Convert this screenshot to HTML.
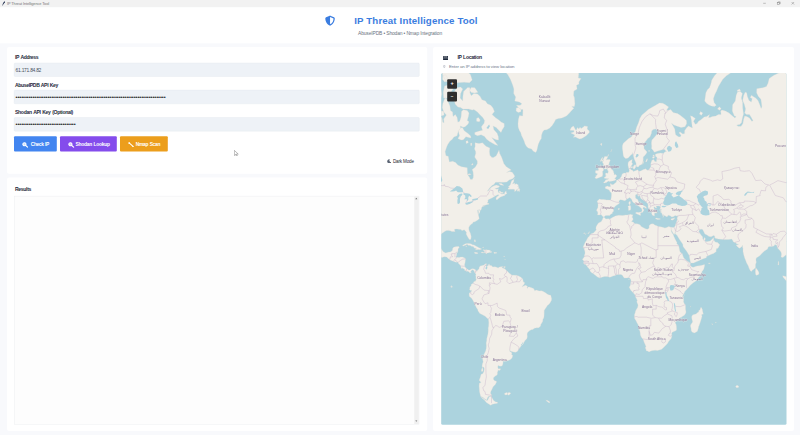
<!DOCTYPE html>
<html lang="en">
<head>
<meta charset="utf-8">
<title>IP Threat Intelligence Tool</title>
<style>
*{box-sizing:border-box;margin:0;padding:0}
html,body{width:800px;height:435px;overflow:hidden}
body{position:relative;background:#f8f9fc;font-family:"Liberation Sans","DejaVu Sans",sans-serif;color:#1e293b}
.abs{position:absolute}
#titlebar{left:0;top:0;width:800px;height:7.2px}
#titlebar .t{left:7px;top:1.2px;font-size:3.9px;color:#777;white-space:nowrap;line-height:5px}
#h1{left:354.2px;top:14px;font-size:9.7px;font-weight:bold;color:#3b7de0;white-space:nowrap;line-height:14px;letter-spacing:0px}
#sub{left:358px;top:31px;font-size:4.9px;color:#6b7280;white-space:nowrap;line-height:6px}
.lbl{word-spacing:0.5px;font-size:5.1px;font-weight:bold;color:#1e293b;white-space:nowrap;line-height:7px}
.inp{left:14px;width:405px;height:13.9px;border:0.4px solid transparent;font-size:4.9px;color:#474f5c;line-height:13.8px;padding-left:0.6px;white-space:nowrap;overflow:hidden}
.btn{top:136.2px;height:15.3px;border-radius:1px;color:#fff;word-spacing:0.5px;font-size:4.9px;font-weight:bold;line-height:18.6px;white-space:nowrap}
#sb{left:414.2px;top:196.4px;width:4.6px;height:227.6px}
.zb{left:447.2px;width:9.8px;height:9.6px;color:#fff;font-weight:bold;text-align:center;font-size:5.5px;line-height:9.4px}
/*FIT*/#t0{letter-spacing:-0.103px}#h1{letter-spacing:0.141px}#sub{letter-spacing:-0.122px}#l1{letter-spacing:-0.354px}#ipv{letter-spacing:-0.255px}#l2{letter-spacing:-0.366px}#d1{letter-spacing:-0.083px}#l3{letter-spacing:-0.325px}#d2{letter-spacing:-0.083px}#b1{letter-spacing:-0.396px}#b2{letter-spacing:-0.243px}#b3{letter-spacing:-0.316px}#dm{letter-spacing:-0.163px}#l4{letter-spacing:-0.344px}#l5{letter-spacing:-0.314px}#hint{letter-spacing:-0.109px}/*ENDFIT*/

.dots{position:relative;top:0px;color:#222;font-size:5.6px}
</style>
</head>
<body>
<svg class="abs" style="left:0;top:0" width="800" height="435" viewBox="0 0 800 435">
<rect width="800" height="435" fill="#f8f9fc"/>
<rect width="800" height="7.3" fill="#f2f2f2"/>
<rect y="7.3" width="800" height="36" fill="#fff"/>
<rect x="7" y="47" width="420.2" height="126.7" rx="2" fill="#fff"/>
<rect x="7" y="177.6" width="420.2" height="253.4" rx="2" fill="#fff"/>
<rect x="433" y="47" width="361" height="384" rx="2" fill="#fff"/>
<g fill="#eef2f7" stroke="#e2e7ee" stroke-width="0.35">
<rect x="14.1" y="63" width="405.2" height="13.5" rx="1"/>
<rect x="14.1" y="90.1" width="405.2" height="13.7" rx="1"/>
<rect x="14.1" y="117.5" width="405.2" height="13.7" rx="1"/>
</g>
<rect x="14" y="136.2" width="42.8" height="15.3" rx="1" fill="#4285f0"/>
<rect x="60" y="136.2" width="56.8" height="15.3" rx="1" fill="#844cec"/>
<rect x="120" y="136.2" width="47.8" height="15.3" rx="1" fill="#ec9e1c"/>
<rect x="14.2" y="196.1" width="404.8" height="228.1" fill="#fdfdfd" stroke="#e9ebee" stroke-width="0.4"/>
<rect x="414.2" y="196.3" width="4.6" height="227.7" fill="#f0f0f0"/>
</svg>
<div id="titlebar" class="abs">
  <svg class="abs" style="left:1.7px;top:0.9px" width="3.4" height="4.8" viewBox="0 0 10 14"><path d="M8.5 0.5 C5 2 2 7 1.2 13.5 L2.6 13.5 C3.4 10 5 7.5 9 4.5 Z" fill="#1f2d4d"/></svg>
  <div class="abs t" id="t0">IP Threat Intelligence Tool</div>
  <svg class="abs" style="left:760px;top:0" width="40" height="7" viewBox="0 0 40 7" fill="none" stroke="#7a7a7a" stroke-width="0.45">
    <path d="M3.2 3.3h2.6"/>
    <rect x="17.2" y="2.6" width="2.2" height="2.0"/><path d="M18 2.6v-0.7h2.2v2h-0.8"/>
    <path d="M31.6 2l2.5 2.5M34.1 2l-2.5 2.5"/>
  </svg>
</div>
<svg class="abs" style="left:325.3px;top:14.8px" width="10.1" height="11.3" viewBox="0 0 512 512"><path fill="#3b7de0" d="M256 0c4.600 0 9.200 1 13.400 2.900L457.700 82.800c22 9.300 38.400 31 38.300 57.200c-.5 99.200-41.300 280.700-213.600 363.200c-16.700 8-36.100 8-52.800 0C57.300 420.700 16.500 239.200 16 140c-.1-26.200 16.300-47.900 38.300-57.200L242.700 2.900C246.800 1 251.400 0 256 0zm0 66.800V444.800C394 378 431.100 230.100 432 141.400L256 66.800z"/></svg>
<div id="h1" class="abs">IP Threat Intelligence Tool</div>
<div id="sub" class="abs">AbuseIPDB • Shodan • Nmap Integration</div>

<div class="abs lbl" id="l1" style="left:15px;top:53.7px">IP Address</div>
<div class="abs inp" style="top:62.9px"><span id="ipv" style="position:relative;top:0px">61.171.84.82</span></div>
<div class="abs lbl" id="l2" style="left:15px;top:81.5px">AbuseIPDB API Key</div>
<div class="abs inp" style="top:90.1px"><span class="dots" id="d1">••••••••••••••••••••••••••••••••••••••••••••••••••••••••••••••••••••••••••••••••</span></div>
<div class="abs lbl" id="l3" style="left:15px;top:108.5px">Shodan API Key (Optional)</div>
<div class="abs inp" style="top:117.5px"><span class="dots" id="d2" style="top:-0.7px">••••••••••••••••••••••••••••••••</span></div>

<div class="abs btn" style="left:14px;width:42.8px"><svg class="abs" style="left:8.0px;top:5.8px" width="6.4" height="5.55" viewBox="0 0 12 10.4"><circle cx="4.6" cy="4.2" r="2.9" fill="#fff" fill-opacity="0.7" stroke="#fff" stroke-width="2.1"/><path d="M7 6.6L10.6 9.6" stroke="#fff" stroke-width="2.2" stroke-linecap="round"/></svg><span class="abs" id="b1" style="left:16.8px">Check IP</span></div>
<div class="abs btn" style="left:60px;width:56.8px"><svg class="abs" style="left:8.3px;top:5.8px" width="6.4" height="5.55" viewBox="0 0 12 10.4"><circle cx="4.6" cy="4.2" r="2.9" fill="#fff" fill-opacity="0.7" stroke="#fff" stroke-width="2.1"/><path d="M7 6.6L10.6 9.6" stroke="#fff" stroke-width="2.2" stroke-linecap="round"/></svg><span class="abs" id="b2" style="left:15.5px">Shodan Lookup</span></div>
<div class="abs btn" style="left:120px;width:47.6px"><svg class="abs" style="left:7.8px;top:5.8px" width="6.2" height="5.4" viewBox="0 0 12 10.4"><path d="M2.2 1.8L9.8 8.6" stroke="#fff" stroke-width="2" stroke-linecap="round"/><circle cx="2.4" cy="2" r="1.7" fill="#fff"/><circle cx="9.6" cy="8.4" r="1.3" fill="#fff"/></svg><span class="abs" id="b3" style="left:15.8px">Nmap Scan</span></div>

<svg class="abs" style="left:386.9px;top:158.9px" width="4.6" height="4.6" viewBox="0 0 10 10"><path d="M6.2 0.6A4.6 4.6 0 1 0 9.4 6.6 3.6 3.6 0 0 1 6.2 0.6Z" fill="#5b6474"/></svg>
<div class="abs" id="dm" style="left:392.9px;top:159.3px;font-size:4.6px;line-height:6px;color:#1f2937;white-space:nowrap">Dark Mode</div>

<svg class="abs" style="left:234.1px;top:149.5px" width="4.6" height="6.8" viewBox="0 0 13 19"><path d="M1 1v14.5l3.6-3.3 2.5 5.8 2.3-1-2.5-5.6h5.1z" fill="#fff" stroke="#444" stroke-width="1.3" stroke-linejoin="round" opacity="0.8"/></svg>
<div class="abs lbl" id="l4" style="left:15px;top:185.5px">Results</div>
<div id="sb" class="abs"><svg class="abs" style="left:0;top:0" width="4.6" height="227.6" viewBox="0 0 4.6 227.6"><path d="M1.3 3.1L2.3 1.7L3.3 3.1Z" fill="#6a6a6a"/><path d="M1.3 224.6L2.3 226L3.3 224.6Z" fill="#6a6a6a"/></svg></div>

<svg class="abs" style="left:442.9px;top:55.8px" width="5.2" height="4" viewBox="0 0 13 10"><rect x="0" y="0" width="13" height="10" rx="1" fill="#1e293b"/><path d="M2 2.2h3.2M7.8 2.2H11M5.2 0v3.6M7.8 0v3.6M0 5.2h13" stroke="#fff" stroke-width="1" opacity="0.85"/></svg>
<svg class="abs" style="left:443.2px;top:64.6px" width="2.6" height="3.5" viewBox="0 0 7.4 10"><path d="M3.7 0.3A3.3 3.3 0 0 0 0.4 3.6C0.4 6 3.7 9.7 3.7 9.7S7 6 7 3.6A3.3 3.3 0 0 0 3.7 0.3Z" fill="#c9ccd3"/><circle cx="3.7" cy="3.5" r="1.2" fill="#fff"/></svg>
<div class="abs lbl" id="l5" style="left:457.4px;top:54.4px">IP Location</div>
<div class="abs" id="hint" style="left:449px;top:63.7px;font-size:4.35px;line-height:6px;color:#6f7a8c;white-space:nowrap">Enter an IP address to view location</div>
<svg class="abs" style="left:0;top:0" width="800" height="435" viewBox="0 0 800 435">
<defs><clipPath id="mc"><rect x="441.2" y="73" width="345.3" height="351.7" rx="1.5"/></clipPath></defs>
<g clip-path="url(#mc)"><rect x="440" y="72" width="348" height="354" fill="#acd3de"/><g transform="translate(441.5 73.5)" style="filter:blur(0.3px)">
<path d="M161.5 144.1L162.6 143.8L164.4 145.4L166.8 145.2L168.4 145.6L170.9 144.1L173.8 142.5L177.3 141.7L181.1 141.9L184.3 141.4L185.9 141.5L189.6 140.7L190.3 141.6L191.6 141.2L190.8 142.7L190.8 144.1L191.7 145.4L191.2 146.5L190.0 148.2L191.6 148.6L193.5 150.3L195.5 150.3L197.2 150.7L198.8 151.4L199.4 152.8L201.5 153.9L204.0 155.3L205.8 155.7L207.6 154.7L207.6 153.0L207.7 152.0L209.0 150.7L210.6 150.2L212.2 150.5L213.2 151.6L214.7 152.0L216.8 153.0L220.4 153.5L223.4 154.6L225.2 153.9L227.1 153.0L229.4 153.7L230.0 156.3L229.6 157.2L230.5 159.4L231.6 160.8L232.1 162.0L232.4 163.0L234.0 166.2L235.1 168.4L235.5 168.5L235.3 170.3L237.1 171.8L237.6 174.1L238.1 176.8L238.5 178.3L239.7 179.4L240.6 179.8L241.7 182.9L242.2 184.2L243.1 185.3L245.2 187.2L247.2 188.4L247.9 189.0L249.0 189.9L248.8 191.0L247.9 191.6L249.0 191.8L250.2 193.5L252.0 193.7L253.8 193.1L255.6 192.4L257.7 192.3L259.5 192.1L261.4 191.5L263.0 191.0L263.1 192.3L262.8 193.6L262.3 195.5L261.4 197.0L260.5 198.0L259.6 200.2L258.2 202.8L255.6 206.1L253.8 207.9L252.5 208.7L250.2 210.5L248.4 212.3L247.6 213.2L246.0 215.3L244.7 216.4L243.3 218.0L242.6 219.5L241.5 221.4L241.0 223.0L241.9 224.4L242.2 226.6L242.0 228.2L242.8 230.2L243.8 231.1L244.0 232.9L244.0 235.6L244.5 238.4L244.2 239.8L242.9 241.7L240.4 243.3L237.8 244.7L236.5 246.3L234.0 248.2L233.7 249.5L234.4 250.5L234.9 252.6L235.1 255.9L234.6 257.1L232.4 258.1L230.7 258.8L230.1 260.2L230.5 261.9L229.8 264.8L228.9 266.0L227.1 268.0L226.0 269.9L224.1 272.0L221.6 274.5L219.8 276.0L217.5 276.6L216.1 277.1L213.6 276.7L211.3 277.1L209.3 277.5L207.6 278.4L206.1 277.5L204.9 277.4L204.7 276.4L203.8 274.3L204.5 273.0L203.3 270.3L202.6 268.7L202.0 266.7L201.3 265.4L199.9 263.8L198.9 261.5L198.5 258.2L197.8 255.9L197.8 253.9L196.9 251.8L195.6 249.5L194.4 247.1L193.2 245.2L192.9 243.4L193.0 241.1L193.6 239.6L194.0 237.4L195.1 235.5L196.0 234.3L196.5 232.0L196.4 230.9L195.5 228.9L195.3 228.0L195.8 227.1L194.9 225.1L193.9 223.2L193.7 222.2L193.1 220.8L191.7 219.3L190.8 218.3L189.1 216.6L188.4 215.1L187.6 213.6L188.5 212.8L188.8 211.6L189.1 210.5L189.3 209.0L189.5 207.1L189.1 205.5L188.4 205.0L187.8 204.2L186.8 204.2L185.3 204.4L184.4 204.5L182.8 204.6L181.6 203.0L180.9 201.8L179.5 201.1L178.0 200.9L176.3 201.0L174.1 201.4L173.8 202.0L171.6 202.4L169.8 203.2L168.3 203.8L166.7 203.2L164.9 203.0L163.1 203.1L161.2 203.5L159.6 204.1L158.3 204.6L156.0 203.4L154.2 202.1L152.8 201.1L151.6 200.0L149.8 199.1L148.9 198.0L148.4 197.1L148.4 196.1L147.6 195.3L146.0 193.5L145.3 192.6L144.3 191.1L143.0 190.8L142.2 190.1L142.1 188.8L142.5 188.2L142.1 187.2L140.9 185.8L141.8 184.8L142.7 183.5L143.0 181.6L143.6 179.6L143.2 177.1L142.7 176.0L143.0 174.9L141.7 174.5L141.8 173.1L142.5 171.4L143.6 168.9L145.0 166.8L145.7 165.2L146.2 164.2L147.8 162.8L148.5 161.4L149.1 160.5L151.9 159.4L153.9 157.6L154.8 155.9L154.4 155.1L154.6 153.2L155.6 151.6L156.9 149.6L158.5 148.8L159.8 148.0L160.8 146.2L161.3 144.9ZM259.6 233.7L260.7 235.6L261.2 238.0L261.8 240.4L261.2 241.1L260.5 240.2L260.2 241.7L260.5 242.8L259.9 245.1L259.1 247.7L258.0 250.9L257.2 253.0L256.6 255.5L255.9 257.8L254.8 258.6L252.9 259.4L252.2 259.3L250.6 258.6L249.7 257.1L249.6 255.0L249.0 252.8L249.1 251.5L249.9 250.3L250.8 249.0L251.1 247.7L250.7 246.7L250.3 244.8L250.2 243.3L251.0 241.5L252.5 241.1L254.3 240.6L255.4 239.8L256.1 238.9L257.2 238.5L257.3 237.1L258.4 236.5L258.9 235.2L259.1 234.2ZM355.1 109.4L355.1 -17.2L349.8 -5.1L346.2 -3.6L341.8 -2.1L337.3 -0.6L332.0 1.9L327.7 5.1L326.5 9.8L324.9 13.1L321.3 14.3L317.8 14.7L315.3 15.3L315.1 19.3L316.9 22.9L319.4 25.7L320.1 30.2L320.4 33.4L319.6 35.0L318.3 31.3L316.5 26.9L314.2 24.6L311.6 22.9L310.0 21.7L308.7 24.0L310.7 25.2L309.8 28.6L307.5 26.9L305.9 22.9L305.2 19.3L303.6 18.7L302.1 22.3L301.2 26.9L302.8 30.7L304.1 35.5L303.2 39.6L305.0 41.1L308.0 41.1L309.8 44.0L311.6 47.3L310.3 47.8L308.0 44.5L305.3 43.1L303.2 42.6L302.1 45.9L301.4 50.1L299.6 52.8L296.4 52.8L295.2 51.5L298.2 51.0L300.0 49.2L300.9 44.5L302.0 40.6L301.2 34.5L301.1 29.1L299.8 24.6L300.9 19.9L298.2 17.5L296.3 18.1L294.7 21.7L293.8 27.4L291.1 31.3L290.8 37.6L292.9 42.6L294.7 43.1L293.4 44.5L289.3 41.1L287.6 39.6L284.0 37.6L280.4 36.6L279.2 37.6L279.6 41.1L276.9 41.1L274.2 42.6L270.7 43.1L268.5 44.0L267.1 44.0L268.0 41.1L265.3 43.1L262.7 43.5L259.1 46.4L257.0 47.8L255.6 50.1L253.8 50.8L252.0 47.8L253.8 45.0L251.1 43.1L249.0 42.3L249.9 46.4L250.6 52.4L250.9 54.6L249.3 53.7L247.0 52.4L244.9 54.6L243.1 57.2L243.1 60.1L241.3 60.5L238.7 58.4L237.4 59.3L239.6 61.8L238.7 63.4L236.9 63.2L234.2 61.3L233.7 58.9L233.3 55.4L231.6 52.4L230.0 49.7L232.4 51.5L235.1 52.6L239.6 54.1L243.5 53.2L245.2 50.1L244.9 46.9L242.8 45.0L238.7 41.8L236.0 40.1L231.6 39.1L229.2 36.1L227.1 36.8L225.0 36.8L227.1 33.4L223.6 31.0L221.2 29.7L217.9 29.4L214.1 31.8L210.2 34.0L206.7 36.1L204.0 38.6L200.4 41.6L198.3 45.0L197.2 48.7L195.1 53.7L193.9 58.0L191.6 60.9L189.8 63.4L187.1 65.0L184.4 67.4L181.8 69.7L180.9 72.3L180.9 75.3L181.4 78.2L181.6 80.6L182.0 82.7L183.6 84.7L184.6 85.1L186.6 84.4L188.0 83.0L189.2 81.7L190.7 80.6L190.8 78.9L191.4 81.0L191.9 82.3L192.6 85.1L193.3 86.7L194.6 89.7L194.6 91.6L195.1 93.2L196.9 93.5L197.8 91.9L200.1 91.1L201.2 89.3L201.7 86.1L201.7 83.4L203.1 82.3L204.5 80.6L205.6 78.5L203.6 76.2L202.6 75.3L202.4 72.3L202.9 69.3L204.5 67.4L206.3 65.0L208.4 63.4L209.9 60.1L210.2 57.6L211.6 55.9L214.3 55.4L216.4 56.7L217.2 58.9L215.6 60.5L213.1 63.6L210.4 66.6L209.9 69.3L210.2 72.7L210.0 74.9L211.5 76.7L212.9 78.7L216.3 77.6L219.8 76.5L222.7 75.8L225.0 78.0L223.6 78.3L221.8 79.9L219.1 79.6L216.0 79.9L213.8 80.8L214.0 82.7L215.6 83.9L215.2 85.7L214.8 88.2L213.4 87.9L212.2 85.9L210.4 86.7L209.3 89.7L209.4 92.9L208.4 94.7L207.4 96.0L206.5 96.7L205.2 96.6L204.5 95.3L201.9 96.1L199.6 97.3L197.4 98.1L196.2 96.3L193.9 97.2L191.6 97.9L191.2 96.7L189.8 96.4L189.1 95.2L189.1 93.5L190.0 91.9L191.2 90.3L190.3 89.3L190.5 87.4L190.8 85.9L189.6 86.6L187.3 88.0L186.6 89.3L186.5 91.6L186.8 93.3L187.3 95.0L187.8 96.9L187.6 98.1L186.9 99.0L185.0 98.8L184.4 99.7L182.7 99.6L181.4 99.9L180.5 101.1L180.0 102.8L179.1 104.0L178.2 105.3L177.2 105.8L176.1 106.4L175.0 106.8L174.8 108.5L173.8 109.6L172.4 110.6L171.6 111.3L170.0 111.1L169.7 110.2L168.6 110.2L169.2 112.9L167.6 113.2L165.8 112.6L163.6 113.6L164.0 115.0L166.1 115.7L167.7 116.6L168.4 117.9L169.9 119.5L170.0 121.3L169.8 123.8L169.3 126.2L168.4 126.6L165.2 126.4L161.9 126.0L159.6 126.0L158.0 125.6L156.9 126.6L155.6 127.7L156.4 129.4L156.5 132.0L156.4 134.1L155.3 136.1L155.1 137.5L156.0 138.0L156.4 139.4L156.0 141.4L158.0 141.4L159.6 141.0L160.8 142.4L162.0 143.6L162.6 143.3L164.2 142.1L165.8 142.1L167.7 141.9L168.3 142.0L169.2 140.7L170.8 140.0L171.1 138.5L172.4 137.5L171.5 135.9L172.2 134.6L173.5 133.0L174.7 131.9L175.9 131.3L177.7 130.1L177.9 129.0L177.4 128.0L177.5 127.2L178.9 126.2L180.5 126.5L181.6 126.7L182.7 127.2L183.9 126.9L185.0 125.8L186.6 125.0L187.8 124.0L189.4 124.9L190.3 126.2L190.7 127.6L191.7 128.9L193.0 129.6L193.9 130.6L194.6 131.2L196.2 131.8L197.1 132.6L197.8 133.1L198.7 133.9L199.7 134.5L200.4 136.0L200.6 137.1L200.1 137.8L199.8 139.2L200.6 139.3L201.4 138.3L202.4 136.9L202.2 135.7L201.3 135.2L202.0 133.5L202.8 133.7L204.0 134.6L204.7 135.1L204.9 134.1L204.0 133.1L202.0 131.9L200.3 130.8L200.8 130.1L199.2 130.1L198.1 129.5L197.2 128.7L196.2 126.1L194.4 124.9L193.9 123.8L194.0 122.5L193.9 121.4L195.3 120.8L196.5 121.0L196.2 122.3L196.7 123.0L197.6 121.8L198.5 122.5L199.0 124.5L200.3 125.8L201.3 126.2L203.1 127.5L204.9 128.8L206.1 130.0L206.7 131.5L206.5 133.7L207.6 135.1L208.1 136.1L209.0 137.0L209.5 138.4L210.7 138.5L209.9 139.5L210.4 140.5L210.6 141.7L211.3 141.4L211.8 142.5L212.2 141.9L213.1 142.5L212.9 140.7L212.5 140.2L213.4 140.2L212.9 139.3L214.1 139.4L214.8 139.8L214.7 138.7L213.6 138.0L212.7 137.2L212.9 136.2L213.4 136.6L212.7 135.1L212.3 133.7L212.8 133.2L213.6 134.0L213.9 134.7L214.5 133.9L214.7 134.7L215.3 134.2L214.5 133.0L215.4 132.4L216.6 132.4L218.0 132.6L218.4 133.2L219.6 133.2L218.6 134.4L218.9 134.2L218.4 135.7L219.8 135.6L219.6 137.0L218.9 137.7L220.0 138.1L218.8 138.6L220.4 139.4L220.4 140.6L220.8 141.3L222.3 141.3L220.7 142.1L222.3 141.9L223.7 142.2L224.6 143.2L226.0 143.1L226.6 141.7L227.8 142.0L228.9 142.4L230.3 143.5L232.3 143.1L233.5 141.9L234.9 142.4L236.3 142.1L235.9 143.4L235.6 144.7L235.8 146.0L235.1 148.2L234.4 149.9L233.9 152.0L233.2 153.2L232.1 154.0L229.4 153.7L229.9 156.5L230.8 158.3L231.8 160.0L232.9 160.9L233.4 159.4L234.2 157.3L233.9 159.4L233.6 160.3L235.5 161.7L236.8 163.9L238.2 166.3L239.6 168.2L241.3 170.7L241.6 173.1L243.6 175.7L245.0 177.6L247.6 181.8L248.4 185.7L248.9 188.4L249.3 189.6L252.1 189.4L254.7 188.3L257.3 187.2L259.3 186.2L261.8 185.2L264.8 184.2L264.9 183.1L268.2 181.6L270.5 180.5L272.1 179.9L274.8 177.9L274.6 176.7L275.1 175.1L276.5 174.7L278.3 171.2L276.2 169.1L273.7 168.4L272.9 167.6L272.2 166.1L272.0 164.0L271.5 164.8L270.3 165.9L268.7 167.5L266.2 168.0L264.1 168.3L263.4 167.2L263.7 165.8L263.7 164.6L263.0 164.1L262.2 165.5L262.3 166.9L261.2 165.1L261.2 163.2L260.3 162.4L258.2 159.6L257.2 157.6L258.3 156.5L259.3 155.5L261.1 156.1L262.4 158.5L263.4 160.6L265.5 161.5L267.6 163.0L269.6 163.3L272.1 162.1L273.2 162.4L273.3 164.4L274.7 165.1L276.9 165.6L279.8 165.8L282.8 166.1L286.9 166.0L290.2 165.6L291.1 166.7L291.8 168.3L293.2 169.1L294.2 169.3L295.3 170.6L297.0 170.4L296.5 171.2L294.6 171.6L295.7 172.9L297.1 174.3L298.2 174.7L300.4 173.1L300.9 171.6L301.2 173.9L301.5 175.2L301.5 177.9L302.3 181.6L303.2 184.5L304.3 187.2L305.0 189.2L306.7 192.2L307.5 194.5L308.8 197.2L309.9 197.9L311.0 196.6L312.4 195.7L314.0 193.9L314.0 190.9L314.8 188.8L314.4 186.3L314.8 184.4L316.3 183.5L318.3 182.2L320.1 180.3L322.9 177.4L324.6 176.4L326.1 175.5L326.7 173.5L328.1 172.9L330.2 173.0L332.5 172.5L333.2 171.2L334.5 171.2L335.2 171.7L335.6 173.3L336.1 174.5L337.2 175.8L338.6 177.3L339.6 178.8L340.0 180.7L339.5 183.5L341.4 183.9L343.2 182.6L344.4 181.6L345.5 182.6L345.8 185.3L346.4 187.2L347.3 190.8L347.3 194.4L355.1 194.4ZM161.9 109.2L162.8 109.5L165.5 108.7L166.7 107.4L167.6 107.9L169.7 107.7L172.4 107.3L173.7 106.8L174.5 106.1L174.5 105.5L173.1 105.2L173.8 104.3L174.8 103.4L175.1 102.0L174.3 101.0L172.5 101.2L172.6 100.3L172.2 99.1L171.8 97.4L170.9 96.3L169.9 95.8L169.3 94.4L168.4 92.2L166.5 91.6L167.4 90.7L167.7 89.3L168.3 87.9L168.8 86.7L168.4 86.1L165.8 86.1L164.7 86.6L165.2 85.5L166.6 82.9L163.1 83.0L162.6 84.2L161.7 85.7L161.9 87.4L161.0 89.2L162.0 90.3L161.9 91.9L161.8 93.8L163.1 92.2L163.7 93.3L162.8 95.0L163.4 95.8L165.6 95.0L166.5 94.9L165.6 96.3L166.8 97.5L166.6 99.0L166.5 99.7L164.4 99.6L163.8 99.9L164.5 100.5L163.6 101.4L164.8 102.2L163.6 103.4L162.6 104.0L162.9 104.7L164.5 104.9L166.4 105.3L167.2 104.9L166.7 105.7L165.6 106.0L164.0 106.6L163.6 107.5L162.9 108.2ZM158.9 93.5L161.1 94.0L161.9 95.3L162.2 96.6L161.0 97.9L161.2 99.7L161.3 100.9L160.7 103.1L159.6 103.3L157.4 104.3L154.5 105.3L153.5 104.0L154.4 103.1L154.3 102.0L155.5 101.7L156.0 100.2L154.0 99.6L154.0 97.8L154.2 96.9L156.8 96.9L157.4 96.0L156.4 95.7L157.2 94.3ZM131.6 63.7L133.1 62.4L132.9 61.3L129.3 59.5L132.4 58.4L132.5 56.9L128.4 56.7L130.0 53.7L132.0 52.6L134.0 56.3L134.7 56.9L135.9 54.1L137.3 55.4L138.6 53.7L139.6 55.0L141.6 53.7L143.0 52.4L146.1 52.9L145.7 55.4L147.8 57.6L147.8 58.9L146.6 60.3L145.0 62.0L142.4 63.8L140.2 65.0L138.0 65.4L135.9 64.6L134.0 63.6ZM194.1 139.6L194.6 138.8L195.7 138.8L196.9 139.1L199.1 138.6L199.8 138.6L198.8 140.3L199.2 141.3L198.9 142.1L197.3 141.3L196.1 140.8L194.4 140.1ZM186.6 132.5L187.3 132.6L188.4 131.7L189.1 132.5L189.3 134.6L189.0 136.6L188.0 136.8L187.1 137.1L186.9 136.2L186.9 133.9L186.5 133.2ZM187.3 128.9L188.6 127.5L189.0 129.4L188.4 131.3L187.6 131.0L187.3 129.9ZM213.8 145.2L214.7 144.5L216.6 145.0L218.8 145.3L218.7 145.8L216.0 146.0L213.9 145.3ZM229.4 145.7L230.5 144.9L231.2 145.0L233.5 144.3L232.4 145.5L232.6 145.9L231.8 146.1L230.7 146.7L229.6 146.3ZM176.3 135.6L177.5 134.7L178.1 135.3L177.5 136.2L176.8 136.0ZM212.9 137.0L213.6 136.9L215.0 137.8L215.6 139.2L215.0 139.2L214.0 138.0ZM221.2 143.4L222.1 142.6L222.0 143.5L221.4 143.8ZM218.0 136.4L218.9 136.1L219.3 136.9L218.4 136.9ZM191.6 93.8L192.1 92.4L193.3 91.3L194.4 91.6L194.2 93.8L193.3 94.9L192.8 95.7L191.7 95.3ZM189.4 93.2L190.8 92.9L191.2 94.1L190.3 94.6L189.6 94.1ZM204.2 88.0L205.4 85.2L206.1 85.4L205.4 87.7L204.5 88.7ZM201.2 91.0L201.5 88.9L202.4 87.2L201.9 89.3ZM210.8 84.1L211.5 83.0L213.4 83.2L212.9 84.1L211.5 85.1ZM211.2 82.0L212.2 81.4L213.0 82.2L212.0 82.7ZM206.8 77.4L207.6 76.7L208.3 77.4L207.6 78.0ZM314.0 194.9L314.7 194.7L316.4 197.0L317.2 198.5L317.5 199.8L317.0 201.0L315.3 201.8L314.4 201.4L314.0 199.9L313.9 198.0L314.1 196.2ZM263.2 27.4L263.7 24.0L264.4 19.3L265.9 16.2L268.0 14.3L269.4 10.5L270.3 6.5L273.0 2.3L276.9 -2.1L282.2 -5.1L287.6 -8.2L292.9 -10.5L294.7 -5.8L290.2 -1.3L284.9 2.3L281.3 5.8L279.2 9.2L276.9 13.1L275.1 17.5L273.3 21.1L271.9 25.2L272.6 29.1L274.8 31.8L273.0 32.9L269.8 32.4L267.1 31.3L265.0 29.7ZM276.0 35.5L277.8 33.2L279.6 35.0L278.3 36.8ZM257.9 40.6L259.1 38.1L261.2 39.6L260.0 41.8ZM295.6 16.8L298.2 15.6L299.1 17.5L296.4 18.4ZM266.8 189.8L268.0 189.5L268.9 189.8L267.6 190.3ZM294.1 312.8L295.6 311.7L297.3 312.8L296.8 314.1L295.0 314.3ZM241.7 222.5L242.0 223.0L242.3 223.7L241.9 223.7ZM242.5 221.0L242.8 221.6L242.6 222.0ZM142.0 159.7L143.4 159.3L142.8 160.3ZM143.9 160.4L144.6 160.1L144.6 160.8L144.1 160.9ZM146.2 160.2L147.4 158.9L148.1 158.0L147.3 160.0ZM187.0 206.2L187.8 205.6L187.5 206.6ZM248.9 232.7L249.3 233.6L249.0 233.6ZM270.2 250.3L271.2 250.5L270.8 251.2ZM274.0 248.6L274.8 249.0L274.2 249.5ZM158.8 70.4L160.4 69.7L160.1 72.3ZM169.3 78.5L170.4 75.6L169.9 77.1ZM166.1 81.8L167.2 81.0L167.0 82.2ZM159.6 85.7L161.0 83.5L161.0 85.1L159.6 88.0L158.8 87.7ZM160.1 87.1L161.0 86.2L161.9 87.7L161.0 88.0ZM336.8 188.1L337.3 188.1L337.2 191.5L336.4 191.4ZM341.2 202.3L344.4 203.0L346.2 203.8L348.0 206.1L348.0 210.5L345.7 208.4L343.6 205.9L341.6 203.8ZM-12.9 134.6L-12.9 44.0L-7.6 46.4L-3.1 46.4L-2.2 43.1L0.4 44.0L1.3 48.7L2.6 49.2L2.2 45.5L4.9 41.6L2.2 38.6L0.8 34.0L1.3 30.2L3.1 25.2L4.4 24.6L6.7 28.6L8.4 32.4L9.0 37.1L11.1 38.6L11.5 43.1L13.8 41.1L15.6 44.0L16.4 48.7L18.2 47.8L19.6 43.5L20.0 38.1L21.8 36.3L25.7 37.1L27.5 39.6L26.9 43.1L25.7 46.9L27.5 48.3L26.6 50.6L23.6 53.2L21.8 53.7L18.8 52.4L19.1 54.6L16.8 57.6L15.6 62.2L12.4 63.4L10.8 65.8L8.4 67.7L6.1 71.2L4.9 74.2L3.6 78.2L4.5 82.3L6.7 82.7L7.9 88.4L11.1 87.7L14.1 89.0L16.3 91.6L20.0 93.2L23.0 93.8L25.7 94.3L25.9 98.4L26.0 101.1L28.0 103.7L28.7 105.7L30.7 106.0L31.7 104.3L31.9 102.0L31.6 98.4L30.7 96.0L33.7 93.8L35.8 90.3L35.8 87.4L33.2 83.5L34.2 79.9L34.2 78.2L33.0 75.3L33.7 72.7L33.5 69.3L37.6 70.1L41.0 69.3L44.4 72.7L48.3 74.4L47.9 78.2L48.4 81.7L50.4 84.1L52.0 84.1L54.7 82.3L55.9 79.9L57.5 76.7L58.2 79.9L60.0 83.4L61.2 86.7L62.3 90.0L64.8 93.2L66.8 94.4L69.8 96.6L68.0 97.3L65.0 99.0L68.0 98.1L70.7 98.7L72.8 101.7L73.2 103.1L71.6 104.9L70.5 105.4L67.6 106.6L65.3 108.5L62.1 108.8L58.9 108.7L54.0 108.8L52.4 111.1L50.8 111.7L48.1 114.4L45.8 117.7L47.2 117.1L48.4 115.2L50.2 113.6L52.0 112.5L54.7 111.5L57.7 112.4L57.9 113.4L55.6 114.5L53.4 114.8L55.4 115.7L57.0 115.2L56.4 117.1L57.0 119.0L58.6 119.6L60.5 120.8L62.0 120.3L62.8 120.9L63.0 119.5L64.6 117.3L64.8 119.0L65.4 120.2L63.7 121.1L63.6 121.7L59.0 123.5L57.0 125.0L55.4 126.5L54.4 125.5L55.0 123.5L57.3 122.0L56.8 121.1L54.6 121.9L52.9 123.0L50.8 124.3L49.3 124.9L47.1 125.9L46.3 127.3L46.5 128.3L45.8 129.0L46.4 130.0L47.4 129.8L47.6 130.6L46.4 131.0L45.2 131.2L43.8 131.5L42.4 131.7L41.0 132.5L44.0 132.1L40.6 133.2L40.4 133.5L39.7 136.1L38.8 137.1L37.8 135.7L38.5 137.4L38.5 138.4L38.0 139.4L36.9 141.1L37.1 138.7L36.7 136.0L36.0 136.9L36.4 139.8L36.9 141.6L37.4 143.4L37.7 145.3L35.9 146.7L33.4 148.3L31.7 148.6L31.2 149.7L30.0 150.6L28.2 152.2L27.3 154.0L27.3 155.6L27.5 156.6L28.0 158.0L28.8 159.5L29.2 161.1L29.7 163.0L29.5 164.9L29.1 166.0L27.8 166.1L26.6 164.1L25.8 162.7L25.0 161.2L24.7 160.4L25.0 159.0L24.4 158.1L22.7 156.2L20.9 157.1L20.3 157.0L19.6 156.1L17.0 155.7L15.6 155.5L14.0 155.6L12.9 155.9L13.1 156.8L13.6 158.3L12.9 158.0L12.0 158.0L10.2 158.1L9.5 157.5L8.4 157.3L6.7 156.9L5.2 157.0L3.5 157.8L2.5 158.5L1.3 159.3L-0.8 160.9L-1.2 162.8L-0.7 164.5L-1.8 168.8L-1.9 171.7L-1.0 174.2L1.2 177.5L1.8 178.3L4.2 179.5L5.8 179.0L7.3 178.6L8.8 178.5L10.7 177.2L11.0 176.3L11.3 174.4L12.6 173.6L15.3 173.0L17.2 173.0L17.8 173.8L16.5 175.6L16.5 176.9L16.0 179.2L15.2 178.8L15.2 180.7L14.9 182.6L14.1 183.5L14.5 184.0L15.6 183.8L17.7 183.9L19.1 183.6L20.9 183.5L22.7 184.2L24.2 185.3L23.8 187.1L23.6 189.0L23.1 190.8L23.2 192.7L24.4 194.4L25.8 195.6L27.1 196.6L28.4 196.5L30.0 195.6L30.6 195.2L31.6 195.2L33.3 195.7L34.5 196.8L35.4 198.1L34.6 198.2L33.5 199.5L32.8 198.6L32.8 197.5L31.6 196.4L30.7 196.3L29.8 197.3L29.1 197.7L29.8 199.0L28.2 199.5L27.8 198.6L26.7 197.9L25.5 197.5L24.7 198.0L24.1 197.0L23.2 197.2L23.4 196.3L22.4 195.5L21.2 194.5L20.7 194.2L20.7 195.2L19.6 194.4L19.4 192.8L19.3 192.2L17.0 189.9L16.6 189.0L15.9 188.4L14.7 188.7L12.3 187.9L10.5 187.3L8.1 186.2L5.1 183.5L2.8 183.2L0.4 184.1L-0.6 183.8L-5.6 181.9L-12.9 177.9ZM34.6 197.1L35.3 197.9L36.2 196.4L37.5 195.4L37.7 193.7L38.9 192.5L40.1 192.2L42.4 191.6L44.6 190.0L45.4 191.0L44.1 191.5L44.7 192.7L45.8 192.6L47.0 191.7L47.2 190.8L47.7 190.4L48.0 191.7L50.4 192.3L51.1 193.5L53.0 193.3L54.6 193.4L56.1 194.3L57.0 194.2L57.9 193.5L59.6 193.2L62.0 193.1L60.7 193.6L60.4 194.3L61.4 194.6L63.6 195.5L64.8 197.0L65.7 197.5L67.8 199.8L68.6 200.2L70.3 201.6L73.9 201.8L76.0 201.9L79.0 203.5L80.3 204.6L81.2 205.4L81.9 208.6L83.3 209.3L82.4 211.1L81.3 212.3L80.6 213.4L82.0 212.6L84.0 211.8L86.0 212.7L85.6 214.1L85.8 215.0L86.7 213.5L87.8 213.4L90.2 214.3L92.0 215.0L92.9 216.4L93.2 217.3L94.8 216.6L97.7 217.4L100.0 217.3L101.8 218.0L103.6 218.9L105.7 220.6L107.5 221.4L109.1 221.5L109.4 222.6L110.1 225.0L110.0 226.7L108.5 229.5L107.3 231.1L106.1 231.8L105.3 233.1L103.6 235.6L102.7 237.1L102.7 238.9L102.6 242.0L102.3 244.4L101.4 245.8L101.2 247.9L100.4 249.2L99.2 251.3L99.1 252.4L97.3 254.2L95.2 254.3L92.9 254.7L91.3 255.9L89.7 256.2L87.6 257.6L86.0 259.3L85.6 260.6L85.8 263.4L85.3 265.2L83.6 266.9L82.8 268.3L81.5 270.7L79.4 272.7L77.1 276.1L76.0 277.7L74.3 278.7L72.1 278.6L69.2 277.7L68.2 276.6L68.3 277.9L69.8 278.8L70.4 279.8L70.0 281.0L71.2 281.8L70.8 283.8L69.7 285.4L67.6 286.7L64.4 287.5L63.0 287.7L61.3 287.4L61.6 288.9L61.2 291.2L60.4 292.5L58.6 292.7L56.5 291.9L56.3 293.5L56.6 295.2L57.9 295.2L58.8 295.0L58.9 296.5L57.7 296.9L56.4 296.5L56.6 297.4L55.9 298.6L55.9 300.8L55.2 301.8L53.8 302.6L52.0 304.2L51.9 305.8L53.2 307.2L55.0 307.7L54.8 309.2L53.8 310.9L51.6 313.3L50.6 315.5L49.3 317.9L49.0 319.7L50.4 321.9L48.4 322.4L46.8 322.9L46.0 324.3L45.2 326.5L43.1 325.3L41.3 323.8L39.2 322.9L38.7 320.9L38.0 318.0L37.8 315.2L37.6 312.5L37.8 309.8L39.6 309.0L37.6 306.7L38.8 303.8L39.6 300.8L41.2 300.3L42.4 297.9L42.8 295.4L42.3 293.5L40.9 294.1L40.6 292.3L41.0 290.0L41.7 288.4L41.3 286.6L41.1 284.5L42.0 282.6L42.9 280.1L44.2 277.3L44.7 275.1L44.9 272.4L44.7 269.3L45.2 267.2L45.3 265.1L46.0 262.3L46.5 260.2L46.7 258.2L46.8 255.6L46.7 254.4L47.2 252.6L47.3 249.0L47.0 245.7L45.2 244.2L44.0 243.0L42.8 242.3L40.0 240.8L38.3 239.9L36.4 237.3L36.5 236.5L34.8 233.9L34.0 232.2L32.8 229.8L32.3 228.5L31.4 226.7L29.9 224.5L28.2 223.3L27.7 222.6L27.8 221.3L27.4 220.6L28.2 219.2L29.0 218.5L29.8 218.0L30.0 216.6L29.2 217.1L28.0 216.2L28.5 214.3L28.2 214.2L28.9 212.9L29.7 212.2L29.6 211.1L30.4 210.6L31.8 209.8L31.9 209.1L32.6 207.9L33.9 207.7L34.9 205.4L34.2 204.8L34.6 203.4L34.1 202.5L34.5 200.7L33.5 199.5ZM50.0 322.8L50.6 324.4L52.0 326.8L53.8 328.3L56.1 328.8L55.9 329.7L53.2 330.2L50.8 330.8L49.3 331.7L47.6 330.8L44.9 328.9L43.1 326.8L40.4 324.4L39.6 323.5L41.7 324.7L44.0 326.5L45.8 327.1L46.8 325.6L47.6 323.5L48.8 322.9ZM40.6 294.4L41.3 294.7L41.5 297.1L41.0 298.1L39.8 297.7L40.1 295.9ZM63.0 320.0L65.0 318.9L66.2 319.5L66.0 320.9L64.4 321.5L63.2 320.9ZM66.6 319.2L68.2 318.9L69.3 319.7L68.4 320.8L67.1 321.8L66.4 320.9ZM104.3 326.8L106.2 327.1L108.4 328.6L107.8 329.6L105.7 328.0ZM62.0 194.3L63.6 194.2L63.7 192.9L62.4 193.2L62.8 193.9ZM9.3 212.8L10.0 212.1L10.4 213.7L9.5 214.1ZM10.9 213.2L11.6 213.3L11.5 213.7ZM21.0 172.4L22.1 171.2L24.1 170.3L25.6 170.0L27.0 170.1L27.6 169.9L29.8 170.4L30.8 171.2L32.6 171.4L34.7 172.8L36.7 173.8L37.4 174.2L38.8 174.7L39.6 175.3L40.2 175.5L38.4 176.2L37.2 176.1L33.8 176.3L34.9 175.3L34.6 174.8L33.3 174.7L32.4 174.0L31.8 173.0L29.8 172.7L29.0 172.1L27.6 171.8L26.6 171.8L25.7 170.8L23.7 171.8L22.8 172.1L22.0 172.6ZM24.3 172.4L25.2 172.4L25.2 173.1L24.4 173.1ZM32.7 179.3L33.5 178.8L35.3 179.0L36.5 179.5L36.4 180.0L35.5 179.9L34.8 180.3L33.5 180.0ZM41.5 176.3L43.6 176.4L44.6 176.2L46.3 176.4L47.7 176.6L49.1 177.3L48.3 177.7L49.8 177.9L50.5 178.6L49.4 179.0L47.7 178.9L46.6 179.4L45.6 179.4L45.0 180.5L44.4 179.7L43.1 179.3L40.9 179.4L39.6 179.1L40.2 178.5L42.0 178.9L43.4 178.7L42.8 177.7L42.8 177.0L41.5 176.7ZM52.4 179.1L52.6 178.8L54.5 178.9L55.3 179.0L55.0 179.7L53.6 179.8L52.5 179.9ZM33.0 166.2L33.7 166.2L34.0 167.9L33.5 168.7L32.8 167.5ZM41.0 173.9L42.0 173.5L42.2 174.1L41.3 174.2ZM62.1 182.9L63.0 182.6L62.7 183.5ZM63.2 185.6L63.8 185.9L63.6 186.4ZM94.0 78.9L91.6 77.6L90.1 75.6L86.7 74.5L84.9 72.7L83.7 70.8L82.6 67.4L81.3 64.6L80.1 62.2L79.2 58.9L78.0 57.2L76.7 53.7L76.5 50.3L76.9 45.9L78.0 42.1L81.2 42.6L81.3 39.6L81.5 36.1L79.6 36.1L76.9 34.0L74.9 31.8L78.7 31.8L80.4 30.2L77.8 28.6L73.3 27.4L74.2 23.4L72.2 19.9L72.4 15.6L71.0 11.1L68.9 5.8L66.2 0.9L63.6 -1.7L60.0 -2.4L53.8 -0.6L49.7 -3.6L47.6 -17.2L140.0 -17.2L137.3 -9.0L138.8 -5.8L135.6 -4.3L137.3 0.1L136.8 4.4L139.6 5.1L137.3 8.5L137.5 10.5L135.0 11.8L135.6 15.6L132.4 17.5L132.0 21.7L132.9 24.0L133.4 30.2L132.9 32.9L130.2 32.9L132.4 34.7L131.1 36.1L127.0 40.6L124.9 42.6L120.4 44.5L116.9 45.0L114.2 45.9L112.8 48.7L110.7 51.9L108.0 54.8L105.2 56.3L102.7 56.5L101.1 58.4L100.0 61.8L99.8 65.0L98.2 67.4L96.8 70.8L95.9 74.5L95.2 77.4ZM74.6 37.6L76.9 39.1L79.6 38.1L79.2 35.5L76.9 34.0L74.8 34.5ZM56.4 71.9L53.8 71.2L51.1 69.7L47.7 67.7L44.9 65.4L43.1 63.0L39.6 61.3L36.0 62.2L33.3 60.9L33.3 58.9L37.8 57.6L41.0 56.7L39.9 53.2L42.6 49.7L43.1 46.9L41.3 44.0L38.7 41.6L36.0 38.6L32.4 36.1L30.7 36.6L27.1 35.5L21.4 35.5L19.1 34.0L16.4 33.4L13.8 30.7L12.9 27.4L12.0 22.9L13.2 17.5L15.6 14.3L19.1 13.4L21.2 15.6L19.1 19.9L18.6 24.6L21.2 27.4L21.4 22.9L22.1 18.1L26.2 14.0L28.4 14.3L28.4 19.3L29.8 22.3L32.4 19.9L36.0 20.5L38.7 22.9L40.4 26.3L44.0 27.4L45.8 30.2L49.3 31.8L51.5 34.5L52.9 38.1L50.6 41.1L53.8 44.0L57.3 46.4L60.0 48.7L62.7 50.1L62.7 53.2L60.9 55.9L59.5 58.9L57.3 56.7L54.7 54.1L51.6 52.4L52.4 56.3L55.6 59.7L56.8 63.0L57.0 66.6L54.7 66.2L52.0 65.0L50.2 64.0L52.9 67.4L54.7 69.7ZM28.0 16.8L29.8 14.0L33.3 14.3L36.4 18.7L33.3 19.6L29.8 19.0ZM16.8 57.2L19.1 54.6L20.9 54.1L22.7 57.2L26.2 59.7L29.2 62.6L29.4 64.6L24.4 63.2L21.8 66.2L19.6 66.6L16.4 65.0L18.0 62.2ZM24.4 67.7L26.2 67.2L26.8 69.3L24.8 70.1ZM29.1 69.7L30.5 69.7L30.1 72.3L29.2 71.9ZM35.1 47.8L37.8 48.3L38.7 46.4L36.9 44.0L35.1 45.0ZM2.2 24.6L5.8 24.6L8.4 19.9L11.6 15.6L10.2 12.4L6.7 11.5L3.1 12.4L1.7 18.7ZM-9.3 27.4L-4.9 28.6L-1.3 26.3L0.4 20.5L-1.3 13.7L-5.8 13.1L-9.3 15.6ZM-4.9 40.1L-1.3 37.1L2.2 38.1L2.6 41.6L-0.4 42.6L-3.1 42.1ZM-0.4 -7.4L1.3 2.3L4.9 8.1L8.4 8.8L15.6 9.2L22.7 8.8L28.0 9.2L30.7 6.5L28.9 0.9L22.7 -4.3L12.0 -13.0ZM1.0 5.8L3.1 8.5L5.4 7.8L5.8 3.7L4.0 1.2L1.3 2.3ZM25.7 100.8L28.0 100.2L29.8 100.8L27.5 101.4ZM29.8 91.6L31.2 89.7L31.6 91.3ZM57.3 109.8L60.0 109.9L62.3 111.8L60.9 111.8L58.6 111.3ZM57.5 118.4L58.2 117.3L60.0 118.8L61.8 118.8L60.9 120.0L59.1 119.6ZM73.5 104.8L72.4 105.7L70.8 106.8L70.0 107.4L69.0 110.7L68.4 111.8L66.8 113.3L68.0 113.7L66.4 115.0L66.8 115.8L69.6 115.8L72.4 115.8L73.5 116.4L72.6 117.7L74.0 117.7L74.9 116.4L76.0 115.3L75.6 117.9L76.7 116.9L77.7 118.3L78.4 115.9L78.1 115.3L77.4 116.1L77.8 114.3L76.5 115.6L77.6 112.9L76.2 113.2L76.9 111.4L74.7 110.3L73.3 111.0L73.3 109.4L71.0 110.5L72.3 107.7L72.4 106.0Z" fill="#f2efe9" stroke="#e0dcd6" stroke-width="0.3"/>
<path d="M156.6 161.1L156.6 159.0L159.4 157.2L162.6 156.6L165.6 154.5L166.7 152.8L169.7 151.8L168.8 149.5L169.0 146.9L168.1 145.6M141.7 174.1L148.9 173.5L148.9 170.3L150.7 169.4L150.7 164.4L156.6 164.4L156.6 161.1L148.5 161.1M156.6 161.8L163.5 166.4L160.3 166.4L162.2 184.4L153.0 184.6L151.6 184.2L150.3 185.7L148.4 183.3L146.6 182.4L143.6 182.6L142.7 183.5M163.5 166.4L174.1 173.9L174.1 174.7L177.7 176.4L177.9 177.9L179.6 177.6L182.3 176.9L185.3 174.3L193.3 169.3M193.3 169.3L188.9 163.8L189.6 161.4L189.4 158.4L188.9 155.9L190.3 154.5L190.1 152.8L192.4 151.4L192.5 149.8M188.9 155.9L188.1 152.0L186.8 151.1L185.3 148.4L186.6 146.5L186.8 143.6L187.3 141.6M216.7 152.9L216.4 158.0L216.4 172.2L216.4 176.0L214.7 176.0L214.7 176.9L200.4 169.4L198.7 170.3L197.2 171.0L193.3 169.3M216.4 172.2L237.6 172.2M179.6 177.6L179.6 181.8L178.2 184.6L173.8 185.5L172.4 185.4M198.7 170.3L199.6 174.1L199.7 176.2L199.6 181.8L196.0 186.2L196.0 187.7L194.2 188.8L189.8 188.6L186.2 188.4L184.1 188.8L181.8 187.3L179.3 188.1L178.4 191.4M197.1 189.0L197.2 190.1L198.0 191.7L195.6 194.4L194.2 197.0L193.0 199.8L190.7 200.0L188.5 201.6L187.3 203.8M178.4 191.4L178.6 194.1L177.0 196.2L176.9 200.9M214.7 176.9L214.7 184.0L212.7 184.4L212.0 187.0L211.1 189.5L212.7 192.6L210.6 193.5L205.8 196.2L204.0 198.0L201.3 198.6L199.6 198.9L198.7 196.6L196.7 195.0L199.6 194.4L198.7 192.6L198.5 190.4L197.1 189.0M215.0 196.8L215.6 196.4L216.4 193.9L219.1 195.3L221.8 195.5L223.6 195.0L225.3 193.9L227.1 194.8L229.6 191.4L229.6 190.8L231.0 190.4L230.8 193.2L232.6 195.3L233.0 193.3L234.2 191.2L236.2 189.5L236.9 186.6L236.7 185.3L237.8 181.6L240.6 179.8M236.9 186.6L239.4 185.7L241.3 186.1L243.5 186.4L246.0 188.3L247.4 189.9L246.3 191.5L246.3 192.6L248.3 192.7L248.9 191.8M248.3 192.7L250.2 196.2L255.6 198.0L257.3 198.0L252.0 203.4L249.3 203.8L246.7 205.2L246.5 205.3L244.9 207.3L244.9 213.8L245.9 215.2M246.5 205.3L244.5 204.8L242.2 206.2L239.7 205.9L237.6 204.5L235.8 204.1L232.4 204.8L233.3 206.8L234.2 209.3L233.3 210.3L232.4 211.9L232.3 214.1L238.8 217.6L239.0 218.5L241.7 220.6M232.6 195.3L232.6 197.1L230.7 198.2L233.7 200.4L234.8 202.7L235.8 204.1M232.4 204.8L230.7 205.5L228.9 206.0L227.1 205.7L226.8 206.1L224.4 204.3L221.8 204.5L220.7 203.3L219.1 201.6L216.8 198.9L215.0 196.8L213.8 196.2L214.0 194.6L212.7 192.6M199.6 198.9L197.8 201.6L198.0 203.4L198.7 205.2L200.8 208.4L201.5 206.1L205.1 206.1L205.1 204.5L206.7 203.2L211.8 205.0L212.7 203.8L215.6 203.2L217.0 203.4L220.7 203.3M189.4 208.2L192.1 208.4L195.6 208.4L197.8 208.4L200.8 208.4M192.1 208.4L192.1 210.5L189.4 210.5M195.6 208.4L195.5 210.0L197.2 209.8L197.8 213.2L196.7 214.1L197.6 215.7L197.1 216.6L194.2 216.6L193.3 217.5L192.6 216.6L191.7 219.2M205.1 206.1L204.2 208.0L203.6 211.8L203.5 213.2L200.8 216.2L200.3 219.2L199.0 220.0L197.6 221.0L195.3 220.5L194.8 220.1L193.7 222.6M193.9 223.0L195.1 222.8L201.5 222.8L202.0 225.1L206.5 224.8L206.7 226.6L210.8 225.3L210.9 229.4L211.6 232.3L214.7 231.8L214.7 235.6L211.1 235.6L211.1 241.5L213.6 244.1M192.9 243.4L195.1 243.0L196.9 243.7L204.9 243.7L210.0 244.8L213.6 244.1L216.8 244.5M209.3 245.4L209.3 252.4L207.6 252.4L207.6 265.0L205.8 266.0L204.0 265.8L202.9 265.6L201.3 265.4M207.6 257.8L208.8 261.8L211.1 261.4L212.9 258.8L217.3 259.6L219.8 256.3L220.9 255.1L224.3 252.8L221.8 251.5L221.2 249.5L218.6 247.7L217.0 244.5L220.0 244.7L223.2 241.9L226.0 240.4M226.0 240.4L227.6 241.1L230.5 242.4L230.7 243.9L230.1 246.7L230.5 248.6L229.6 251.1L227.6 253.2L224.3 252.8M227.6 253.2L228.9 257.2L228.7 260.0L227.6 260.2L226.8 261.8L228.7 262.8L230.5 261.9M220.0 267.4L221.8 265.6L224.1 266.4L223.9 268.3L222.1 269.5L220.7 268.9L220.0 267.4M214.7 231.8L217.2 233.1L219.8 233.6L220.4 233.4L223.6 236.3L225.0 236.3L225.0 234.1L222.5 233.4L222.8 231.1L223.0 229.8L222.5 228.7L223.4 227.5L226.8 226.9L230.5 229.1L231.2 231.6L230.7 234.7L230.1 236.7L231.0 237.4L225.7 239.3L226.0 240.4M231.0 237.4L233.3 238.4L235.8 239.1L235.6 241.1L234.8 243.2L233.2 241.7L233.0 239.3M234.0 232.9L238.7 233.2L240.4 232.5L243.8 231.1M224.3 220.2L226.2 217.6L226.8 216.6L226.2 214.2L232.3 214.1M226.8 206.1L227.1 208.2L225.7 210.2L224.6 213.2L224.6 214.8L223.6 217.1L224.1 220.1M224.6 214.8L226.2 214.2M223.6 217.1L226.2 216.6M150.3 185.7L151.7 190.1L147.6 189.6L142.3 190.2M147.6 189.6L147.6 191.4L145.3 192.7M142.1 187.9L145.3 187.5L147.5 188.3L145.3 188.6L142.3 188.8M151.7 190.1L155.5 190.1L157.8 194.1L161.0 193.3L162.2 193.7L167.0 195.0L167.2 195.3L167.0 199.8L166.5 203.2M148.4 196.1L151.6 194.4L153.0 196.1L153.7 197.3L155.3 199.1L156.9 198.7L158.3 197.3L157.8 194.1M153.7 197.3L151.6 199.9M156.9 198.7L158.7 202.0L158.6 204.5M167.2 195.3L166.8 192.6L171.8 192.4L172.9 195.3L173.1 198.9L174.1 201.4M171.8 192.4L173.6 192.6L174.8 196.2L174.8 201.2M173.6 192.6L176.3 190.4L178.4 191.4M172.4 185.4L173.8 188.3L175.9 190.1L176.3 190.4M162.2 193.7L162.6 191.2L164.2 189.5L166.1 188.4L168.4 186.8L172.4 185.4M156.2 130.2L157.4 129.6L160.3 130.0L161.0 130.8L159.7 132.3L159.6 135.3L158.7 135.5L159.6 138.7L158.8 141.0M168.8 126.5L173.2 128.2L175.0 128.7L177.7 128.9M185.3 125.5L184.4 124.3L184.3 122.3L184.4 120.2L184.1 119.0L182.8 119.5L184.4 116.4L185.5 115.8L186.6 112.1L183.4 110.7L180.5 109.4L179.5 109.4L176.5 106.3M178.0 105.6L180.9 105.4L182.3 106.1L182.7 107.3L182.8 104.3L184.1 103.7L184.5 102.0L184.8 100.0M182.7 107.3L183.4 108.5L182.8 109.1L183.4 110.7M187.4 95.0L189.6 95.3M197.3 98.1L197.6 100.8L198.0 102.2L198.1 104.3L198.7 106.6L196.5 107.4L193.9 108.5L196.5 112.6L194.8 114.5L195.1 116.1L193.7 115.8L190.5 116.1L189.1 116.1L187.3 115.6L185.5 115.8M184.4 120.2L186.9 119.0L188.0 120.5L188.5 118.7L190.6 117.7L188.9 117.3L189.1 116.1M190.6 117.7L193.7 117.4L194.0 118.2L196.4 118.7L196.2 120.5L196.5 121.0M196.5 112.6L198.7 112.1L202.0 113.2L202.4 114.8L200.6 117.8L197.8 119.0L196.4 118.7M198.7 106.6L201.0 107.7L202.2 108.5L205.5 110.7L202.6 112.5L202.0 113.2M205.5 110.7L207.6 111.5L212.1 111.8L211.4 113.7L207.6 114.2L205.4 115.3L202.4 114.8M206.8 96.4L212.5 96.7L213.8 97.8L214.5 101.7L213.2 102.8L214.0 105.1L214.8 107.1L212.2 110.7L212.1 111.8M209.8 94.0L212.2 94.7L212.5 96.7M209.4 91.4L212.7 90.3L216.4 90.6L219.3 92.6L217.9 95.0L217.5 97.2L213.8 97.8M215.3 85.5L218.2 85.6L220.6 86.6L222.1 91.0L219.3 92.6M221.8 80.1L220.7 82.3L220.9 85.4L220.6 86.6M221.4 76.2L223.6 73.4L228.0 67.4L225.3 64.2L225.2 59.7L225.5 55.9L223.7 50.6L225.3 46.9L222.7 44.5L223.4 40.4L224.1 39.1L221.8 35.5L218.2 37.1L217.7 39.6L216.3 42.6L211.8 42.1L208.5 40.3L214.1 45.9L214.0 49.2L214.9 55.4M223.4 40.4L226.8 36.6M208.5 40.3L204.2 43.1L200.6 47.8L197.8 54.1L196.4 60.5L193.5 64.6L193.7 71.9L194.4 74.5L193.0 78.9L191.9 81.8M222.1 91.0L226.9 92.9L226.8 95.3L230.1 99.3L228.5 103.4L226.2 105.7L221.4 104.9L216.4 104.0L214.0 105.1M228.5 103.4L233.2 104.6L235.3 108.2L239.6 109.6L243.3 110.5L242.6 115.3L239.9 117.1M211.4 113.7L212.7 114.8L216.3 115.6L219.3 114.1L222.1 114.2L223.9 115.0L225.5 119.0L222.1 121.3L224.8 122.0M219.3 114.1L222.1 118.7L222.1 121.3M212.7 114.8L209.7 119.0L208.1 119.6L205.6 120.2L202.2 119.7L201.3 118.7L200.6 117.8M208.1 119.6L210.0 122.5L212.0 123.5L212.4 124.5L212.9 125.5L217.3 125.9L220.0 124.8L222.8 125.6M212.4 124.5L211.8 127.5L211.8 129.2L212.9 131.4L215.6 131.1L218.2 131.3L218.8 130.6L220.5 129.6L221.8 129.9M218.8 130.6L219.3 131.5L218.3 132.8M196.2 121.3L199.2 121.3L199.9 119.5L201.3 118.7M200.1 122.0L202.0 122.0L205.8 122.8L205.8 121.3L205.6 120.2M200.1 122.0L200.8 124.5L203.3 127.5L204.9 128.4L206.1 126.2L206.5 124.5L205.8 122.8M206.1 126.2L208.1 128.0L208.6 129.9L211.8 129.2M206.5 130.2L207.7 128.4L208.6 130.1L208.4 131.5L209.3 132.6L207.9 135.4M209.3 132.6L212.9 131.4M236.0 143.6L237.2 141.9L239.6 141.9L243.1 141.9L247.3 141.2L251.6 141.1L250.6 138.5L250.9 136.0L251.6 135.3L249.5 134.4L249.3 132.0L247.6 131.1L245.9 131.0M243.1 126.5L247.6 127.0L250.2 128.4L254.5 130.1L257.0 131.8L258.4 130.2M254.5 130.1L252.0 131.8L249.3 132.0M252.0 131.8L254.7 137.1M251.6 135.3L254.7 137.1L257.3 135.3L258.9 138.3M247.3 141.2L245.2 146.5L241.0 149.2L236.0 151.1M241.0 149.2L241.7 151.9L237.8 153.2L239.6 155.3L238.7 156.3L236.0 158.0L234.2 157.7M234.2 157.4L235.1 153.2L235.3 150.7L235.6 149.2L237.1 147.5L236.0 146.6M234.4 149.9L235.6 149.2M232.9 153.9L234.0 157.4M241.7 151.9L243.8 152.4L246.7 154.1L251.5 158.0L254.7 158.2L256.8 156.1L258.0 156.3M254.7 158.2L256.8 159.4L258.0 159.3M251.6 141.1L253.8 144.1L252.7 148.0L254.1 149.7L257.0 152.6L256.8 154.3L258.2 156.3M248.1 182.7L248.8 180.9L251.1 180.9L255.0 181.3L257.3 179.4L264.4 177.9L266.4 182.3M264.4 177.9L269.8 176.0L271.0 172.2L270.1 170.8L265.5 170.4L263.7 168.1M270.1 170.8L271.2 167.9L271.7 167.0L272.3 166.5M262.3 166.9L263.2 167.2M267.8 140.6L270.7 138.9L273.7 138.5L277.4 140.3L279.2 142.2L280.8 142.2L281.0 144.5L279.6 146.9L279.7 149.9L280.3 153.2L281.9 154.3L280.3 156.7L283.6 162.0L284.4 163.2L281.5 166.0M280.3 156.7L283.1 157.6L289.9 156.6L290.0 154.5L295.2 152.4L295.6 149.9L297.0 149.5L298.4 147.7L299.3 144.9L298.6 143.4L304.6 141.4L305.2 140.8M281.0 144.5L284.0 144.9L286.7 143.0L290.2 140.6L292.5 141.0L295.2 141.2L296.8 140.1L298.0 138.3L299.1 139.4L299.3 142.1L302.3 140.4L305.2 140.8M290.2 140.6L286.5 137.0L283.1 134.6L282.0 132.0L278.8 131.3L278.7 129.4L276.2 128.0L273.3 131.5L271.6 131.5L270.5 131.5L269.6 129.9L265.3 130.5M271.6 131.5L271.6 122.5L276.2 121.0L280.4 124.0L282.2 126.2L287.4 125.8L289.5 127.5L289.3 129.9L292.9 132.0L298.0 129.3L302.7 128.9L302.8 127.5L306.8 127.7L312.4 128.0L314.6 129.4M314.6 129.4L314.8 123.0L318.7 122.0L318.3 121.3L319.6 116.9L324.0 117.3L324.4 113.7L327.2 111.5M327.2 111.5L323.5 110.5L319.6 106.6L314.2 107.1L310.5 99.9L308.0 97.2L302.7 97.8L298.6 97.2L298.0 93.8L293.2 94.7L287.9 96.6L280.4 98.1L281.3 105.4L278.7 107.1L276.2 106.3L271.0 107.7L268.9 106.6L262.3 104.6L258.6 107.7L258.0 109.9L254.7 113.7L256.3 115.3L257.7 115.6L259.1 119.0M314.6 129.4L310.7 132.0L308.7 132.3L303.0 135.7L305.2 138.0L305.2 140.8M303.0 135.7L297.3 135.5L295.2 134.6L297.3 132.5L299.6 131.3L298.0 129.3M292.5 141.0L292.9 137.1L291.8 136.2L295.2 134.6M299.6 131.3L302.0 132.7L299.5 134.4L297.3 134.1M293.2 168.9L298.2 167.5L296.4 163.4L296.8 160.6L301.8 156.6L304.4 154.3L304.6 150.7L303.6 149.7L303.6 146.5L308.9 145.8L310.3 144.7M305.2 140.8L307.1 144.1L310.3 144.7L312.3 147.3L312.4 151.1L312.1 153.9L316.0 155.9L321.3 158.6L324.9 160.4L328.6 160.6L329.9 160.4L330.2 161.8L331.6 160.0L334.8 160.8L339.1 158.0L343.0 157.6L345.0 159.8M316.0 155.9L314.4 158.8L319.6 161.6L323.1 163.0L328.6 163.6L328.6 160.6M330.2 161.8L331.6 163.0L335.6 162.7L334.8 160.8M345.0 159.8L341.2 164.4L340.2 166.4L337.9 168.3L337.7 171.8L336.6 173.5L336.1 174.5M329.2 163.4L331.6 164.4L331.6 165.8L336.3 166.4L334.1 168.1L334.7 170.3L336.1 168.9L336.6 173.5M329.2 163.4L328.4 166.4L329.9 167.7L329.7 169.9L330.3 172.8M328.1 111.5L333.8 122.0L341.8 124.3L344.4 128.2L349.8 128.4M328.1 111.5L331.5 109.9L336.4 107.1L345.3 109.4L346.8 105.1L349.8 104.6M345.0 159.8L347.5 161.4L347.5 164.6L345.5 168.3L347.8 169.9L349.8 172.2M45.2 191.1L43.1 192.4L42.2 195.7L43.3 197.3L44.0 199.8L47.4 199.8L48.5 201.4L52.1 201.3L51.5 204.3L52.4 206.3L51.5 207.3L53.1 210.2M53.1 210.2L47.9 209.3L47.9 210.3L49.2 211.2L47.5 211.3L48.6 214.3L47.6 219.8L46.3 219.1L47.5 217.1L42.4 216.6L38.3 212.5L36.4 211.6L34.2 211.1L31.8 209.8M38.3 212.5L37.6 215.1L32.8 218.3L32.1 220.5L30.7 221.2L29.2 220.1L29.2 218.3M47.6 219.8L42.4 221.4L40.5 225.4L42.3 228.4L43.6 230.2L46.5 229.3L46.5 232.0L48.4 231.9L49.9 234.7L49.3 238.9L48.3 240.2L49.3 242.0L48.4 243.9L46.8 245.5M48.4 243.9L49.5 246.7L50.4 250.3L51.3 253.9L52.5 253.9M48.4 231.9L50.6 232.0L55.7 229.6L55.9 232.9L57.5 234.5L61.8 236.0L64.4 237.1L65.2 241.5L68.4 241.7L68.5 243.5L69.8 245.2L68.6 248.9L66.9 247.3L62.3 247.8L60.6 252.9L57.7 253.9L56.1 252.6L54.1 252.0L52.5 253.9M68.6 248.9L69.2 252.6L73.0 253.0L73.5 256.3L75.5 256.4L74.9 259.4M60.6 252.9L63.6 255.9L67.5 257.8L69.6 259.0L67.8 262.7L72.4 262.8L74.9 259.4L76.4 262.5L72.8 264.8L69.6 268.7L72.6 270.1L75.8 272.2L77.6 273.9L77.1 276.1M69.6 268.7L68.5 273.5L68.2 276.6M52.5 253.9L50.4 257.2L50.2 260.8L48.1 265.0L47.6 269.1L46.7 271.4L47.7 275.1L46.8 279.2L45.6 282.1L45.8 287.0L44.4 290.5L44.4 294.7L44.5 299.6L44.9 303.3L44.0 307.7L43.5 312.0L41.3 313.9L42.2 317.2L43.5 318.0L44.0 320.9L50.3 321.9M50.0 322.8L50.0 329.6M53.1 210.2L55.6 210.9L59.3 208.4L57.9 205.0L60.4 205.7L64.0 203.0L62.8 201.7L63.4 200.4L64.8 199.6L65.3 197.1M64.0 203.0L65.5 203.4L65.7 205.9L65.4 207.9L67.5 210.2L71.6 208.8L70.1 206.3L68.9 205.2L70.2 202.5L70.5 201.7M71.6 208.8L74.9 208.2L76.0 205.9L75.2 203.4L76.0 202.1M74.9 208.2L78.0 208.4L80.2 205.1M34.5 196.8L33.5 199.5M25.2 195.2L24.6 197.9M23.3 192.8L19.6 192.5M24.2 185.3L21.1 185.7L17.9 187.5L16.8 189.0M15.9 188.3L13.2 186.4L15.2 184.0M13.2 186.4L11.8 187.6M8.1 186.2L9.0 183.3L11.3 183.3L9.5 181.2L10.2 181.2L10.2 180.1L13.5 180.1L13.4 183.7M13.5 180.1L15.0 178.8M44.4 176.6L44.4 179.7M-0.7 164.5L-4.9 161.4L-8.3 156.8L-11.1 158.4M-12.9 112.1L2.8 112.1L2.8 111.0L3.8 112.9L6.7 113.2L9.3 114.6L12.7 114.8L14.8 114.0L21.2 117.7L21.8 118.8L23.6 120.0L25.3 121.8L26.0 126.0L25.5 127.5L24.3 129.4L25.3 130.6L31.6 128.0L31.4 126.4L35.5 126.0L36.4 124.5L39.2 122.5L44.9 122.5L46.1 121.5L47.0 119.5L49.0 116.2L49.5 116.9L51.5 117.1L51.5 120.8L52.7 122.3" fill="none" stroke="#bfa8c3" stroke-width="0.4" stroke-linejoin="round" opacity="0.9"/>
<path d="M223.6 131.8L222.0 130.8L221.6 128.7L222.8 126.5L222.8 124.5L224.8 122.0L225.7 120.0L226.8 118.4L228.7 118.4L229.2 119.7L231.7 119.7L229.8 121.5L231.6 123.5L232.1 124.0L234.6 123.0L236.9 122.0L237.1 121.5L234.8 121.3L234.2 119.7L236.0 118.2L238.7 117.4L241.9 116.9L239.9 118.7L239.2 120.8L237.8 121.8L238.3 123.0L240.4 124.3L242.6 126.2L244.9 127.7L246.0 129.4L245.8 131.1L243.5 132.3L240.4 132.4L237.8 131.8L236.5 131.5L234.6 129.9L232.4 130.0L230.7 129.9L228.0 131.5L225.7 131.9ZM220.0 133.2L221.1 132.3L223.6 132.4L225.2 132.8L223.2 133.7L221.2 133.7ZM259.6 119.0L256.6 121.0L255.2 123.3L256.3 125.5L256.4 127.5L257.9 130.1L259.3 132.3L260.2 133.2L261.4 133.7L260.0 134.6L259.8 136.4L258.9 138.3L259.1 140.1L261.4 141.4L264.4 142.1L267.8 141.6L268.0 140.3L267.6 137.1L266.2 135.7L266.0 134.6L265.9 132.7L266.2 132.0L268.0 132.7L269.2 132.3L268.0 130.4L266.2 130.1L265.3 130.8L265.2 128.4L263.2 127.0L262.5 124.3L261.4 123.8L262.7 122.5L265.9 121.5L266.6 119.5L266.2 117.7L263.6 117.1L260.9 117.9ZM266.0 130.1L267.1 129.4L268.9 130.1L269.2 132.0L266.8 132.0ZM302.7 121.5L303.6 120.0L306.2 117.9L310.7 118.7L312.8 118.2L312.4 119.2L308.9 119.2L306.2 119.2L304.4 121.8L303.2 122.5ZM226.9 78.2L225.3 74.9L226.2 73.1L228.0 72.3L230.5 74.2L230.0 76.4L228.9 77.8ZM234.8 74.5L233.3 71.9L233.5 69.3L234.6 67.7L236.5 71.2L236.9 73.8ZM194.0 83.4L195.1 80.6L196.7 80.6L197.1 82.3L195.1 83.9ZM228.4 213.9L228.5 212.1L230.3 211.6L232.4 211.9L233.7 212.8L232.6 214.1L232.1 215.9L230.7 216.9L228.9 216.9L228.5 215.5ZM223.9 218.3L224.6 218.3L225.0 220.3L225.3 222.1L226.8 224.4L227.5 227.3L226.4 228.0L226.0 226.6L224.4 223.9L223.9 221.2ZM232.3 229.3L233.0 229.4L233.9 232.0L234.0 234.7L234.6 238.0L233.7 238.0L233.0 235.2L232.6 232.5ZM44.7 192.8L45.8 193.0L45.8 194.8L44.9 196.1L44.0 195.2L44.2 193.9ZM81.0 268.9L81.9 269.1L80.8 270.7L79.6 272.2L79.2 271.6L80.6 270.1ZM8.3 118.1L11.1 116.1L13.4 114.2L15.2 112.5L18.2 112.9L20.9 115.0L21.6 117.7L21.2 118.7L18.2 118.7L16.4 118.7L15.2 117.7L14.7 116.9L12.9 117.8L10.6 118.1ZM15.9 129.9L17.5 130.6L18.6 128.7L18.4 125.8L19.1 123.3L20.4 121.8L21.1 120.5L20.0 119.9L18.2 120.5L17.0 121.5L15.7 123.0L15.6 123.8L16.4 124.3L15.9 126.7ZM21.4 120.2L22.7 119.7L25.3 119.7L28.0 120.2L29.8 122.0L30.1 123.3L29.2 123.5L27.6 122.3L26.8 124.0L26.8 126.5L25.5 127.5L25.2 125.5L23.6 125.8L22.8 125.8L23.9 124.0L23.7 122.0L22.1 121.0ZM23.7 130.6L24.3 129.6L27.1 128.4L29.8 128.0L31.7 127.8L30.7 128.9L28.0 130.4L25.3 131.3ZM30.1 126.7L31.4 125.4L34.2 124.9L36.4 124.5L36.5 126.0L34.2 126.7L31.6 126.9ZM-4.4 100.2L-2.8 98.1L-1.9 98.1L-0.4 102.2L0.8 106.6L0.4 108.2L-0.4 108.0L-1.3 104.9L-3.1 102.2ZM44.9 54.6L47.6 51.0L48.4 52.8L46.7 55.4Z" fill="#acd3de"/>
<g font-family="'Liberation Sans','DejaVu Sans','Noto Sans CJK SC',sans-serif" font-size="3.3" fill="#735d88" text-anchor="middle" stroke="#f2efe9" stroke-width="0.4" paint-order="stroke" opacity="0.85"><text x="103.1" y="24.5">Kalaallit</text><text x="103.1" y="28.1">Nunaat</text><text x="139.2" y="60.1">Ísland</text><text x="193.0" y="61.5">Norge</text><text x="199.5" y="71.2">Sverige</text><text x="220.8" y="58.5">Suomi /</text><text x="220.8" y="61.9">Finland</text><text x="338.8" y="73.7">Россия</text><text x="-3.0" y="142.4">United States</text><text x="166.1" y="94.5">United Kingdom</text><text x="191.4" y="106.6">Deutschland</text><text x="221.8" y="99.3">Беларусь</text><text x="175.6" y="118.6">France</text><text x="215.7" y="120.8">România</text><text x="166.5" y="135.8">España</text><text x="197.5" y="131.3">Italia</text><text x="211.3" y="138.0">Ελλάς</text><text x="229.5" y="115.0">Україна</text><text x="173.2" y="157.2">Algérie</text><text x="173.2" y="160.8">ⵍⵣⵣⴰⵢⴻⵔ</text><text x="173.2" y="164.7">الجزائر</text><text x="202.5" y="164.7">ليبيا</text><text x="224.8" y="163.7">مصر</text><text x="151.9" y="172.8">Mauritanie</text><text x="151.9" y="176.8">موريتانيا</text><text x="235.2" y="137.8">Türkiye</text><text x="290.2" y="115.5">Қазақстан</text><text x="285.2" y="132.3">Oʻzbekiston</text><text x="277.7" y="137.8">Türkmenistan</text><text x="247.7" y="150.5">العراق</text><text x="269.0" y="152.6">ایران</text><text x="288.6" y="149.1">افغانستان</text><text x="296.3" y="157.2">پاکستان</text><text x="251.4" y="168.8">السعودية</text><text x="312.9" y="173.4">India</text><text x="42.6" y="205.7">Colombia</text><text x="36.5" y="231.5">Perú</text><text x="58.2" y="242.6">Bolivia</text><text x="84.1" y="238.9">Brasil</text><text x="68.3" y="254.7">Paraguay /</text><text x="68.3" y="258.4">Paraguái</text><text x="170.8" y="181.3">Mali</text><text x="189.8" y="181.3">Niger</text><text x="205.0" y="185.5">Tchad تشاد</text><text x="224.8" y="185.9">السودان</text><text x="186.4" y="197.2">Nigeria</text><text x="221.8" y="197.2">South Sudan</text><text x="220.8" y="201.1">جنوب السودان</text><text x="213.1" y="216.5">République</text><text x="213.1" y="220.3">démocratique</text><text x="213.1" y="224.4">du Congo</text><text x="205.6" y="234.7">Angola</text><text x="202.5" y="255.3">Namibia</text><text x="255.8" y="185.3">اليمن</text><text x="241.6" y="197.0">ኢትዮጵያ</text><text x="255.8" y="202.3">Soomaaliya</text><text x="255.8" y="206.2">الصومال</text><text x="238.6" y="213.8">Kenya</text><text x="234.5" y="225.0">Tanzania</text><text x="236.5" y="247.0">Moçambique</text><text x="43.0" y="284.0">Chile</text><text x="58.2" y="287.7">Argentina</text><text x="215.1" y="266.2">South Africa</text></g>
</g></g>
<rect x="447.2" y="79.2" width="9.8" height="9.5" rx="1" fill="#2e2e2e"/><rect x="447.2" y="91.8" width="9.8" height="9.6" rx="1" fill="#2e2e2e"/>
</svg>
<div class="abs zb" style="top:79.2px">+</div>
<div class="abs zb" style="top:91.8px;font-size:4.5px">−</div>
</body>
</html>
